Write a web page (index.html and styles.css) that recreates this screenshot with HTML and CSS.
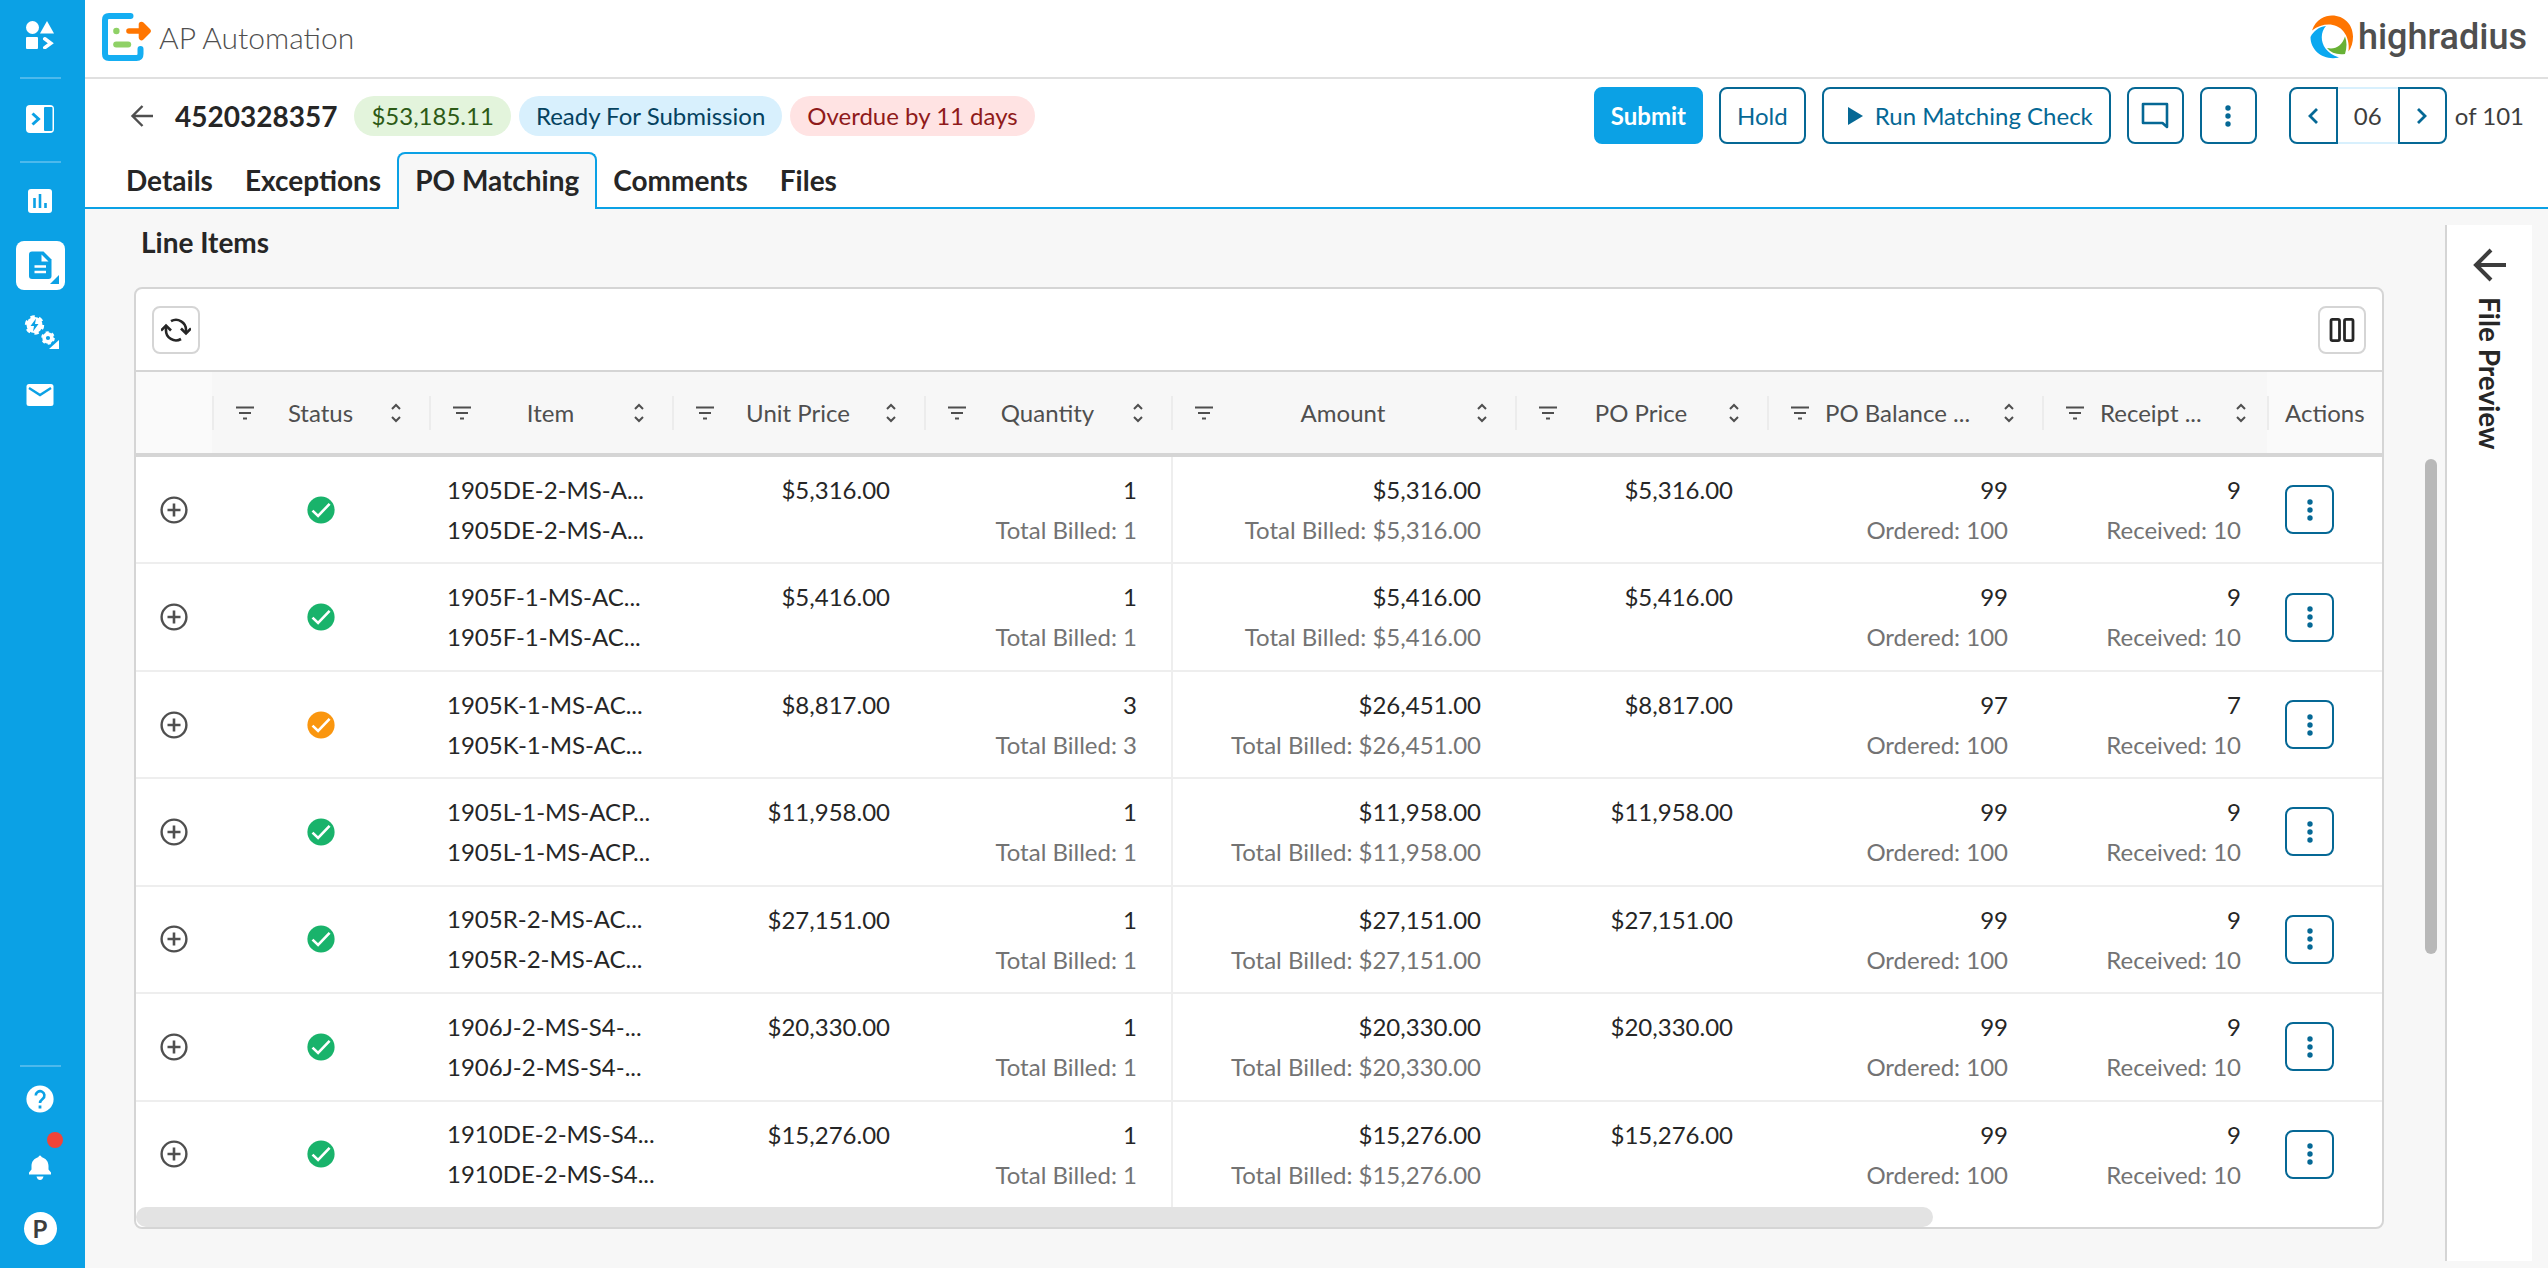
FILE: index.html
```html
<!DOCTYPE html>
<html lang="en">
<head>
    <meta charset="UTF-8">
    <meta name="viewport" content="width=device-width, initial-scale=1.0">
    <title>AP Automation</title>
    <link rel="stylesheet" href="styles.css">
</head>
<body>
    <!-- shared icons -->
    <svg class="sprite" aria-hidden="true">
        <symbol id="plus" viewBox="0 0 28 28"><circle cx="14" cy="14" r="12.4" fill="none" stroke="#4f4f4f" stroke-width="2.4"/><path d="M14 7.5v13M7.5 14h13" stroke="#4f4f4f" stroke-width="2.6"/></symbol>
        <symbol id="check" viewBox="0 0 28 28"><circle cx="14" cy="14" r="13.6" fill="currentColor"/><path d="M5.5 14.6l5.6 5.4L22.6 7.8" fill="none" stroke="#fff" stroke-width="2.6"/></symbol>
        <symbol id="dots" viewBox="0 0 24 24"><circle cx="12" cy="4" r="2.7" fill="currentColor"/><circle cx="12" cy="12" r="2.7" fill="currentColor"/><circle cx="12" cy="20" r="2.7" fill="currentColor"/></symbol>
        <symbol id="filter" viewBox="0 0 18 14"><path d="M0 1.5h18M3 7h12M7 12.5h4" stroke="#4f4f4f" stroke-width="2"/></symbol>
        <symbol id="sort" viewBox="0 0 10 20"><path d="M1 6l4-4 4 4M1 14l4 4 4-4" fill="none" stroke="#4f4f4f" stroke-width="2"/></symbol>
    </svg>

    <div class="app">
        <aside class="sidebar">
            <a class="side-link" href="#" aria-label="Apps">
                <svg width="28" height="28" viewBox="0 0 28 28" fill="#fff"><circle cx="6.5" cy="6.5" r="6.5"/><path d="M21 0l7 12.5H14z"/><rect y="16" width="12" height="12" rx="1"/><path d="M18.8 17.8l6 4.4-6 4.400" fill="none" stroke="#fff" stroke-width="3.6" stroke-linecap="round"/></svg>
            </a>
            <hr class="side-line">
            <a class="side-link" href="#" aria-label="Expand menu">
                <svg width="28" height="28" viewBox="0 0 28 28"><rect width="28" height="28" rx="4" fill="#fff"/><rect x="18" y="2" width="8.5" height="24" rx="1" fill="#0ba1e5"/><path d="M6.500 8.5l6 5.5-6 5.5" fill="none" stroke="#0ba1e5" stroke-width="3"/></svg>
            </a>
            <hr class="side-line">
            <a class="side-link" href="#" aria-label="Dashboard">
                <svg width="24" height="24" viewBox="0 0 24 24"><rect width="24" height="24" rx="3" fill="#fff"/><path d="M6.5 9v10M12 5v14M17.5 14v5" stroke="#0ba1e5" stroke-width="2.6"/></svg>
            </a>
            <a class="side-link active" href="#" aria-label="Invoices">
                <svg width="49" height="49" viewBox="0 0 49 49"><path d="M16 10.5h11.5l8 8V35q0 3-3 3H16q-3 0-3-3V13.5q0-3 3-3z" fill="#0ba1e5"/><path d="M25.5 13.5v7h7z" fill="#fff"/><path d="M18.5 25.5h11.5M18.5 31h11.5" stroke="#fff" stroke-width="2.4"/><path d="M43 34v9h-9z" fill="#0ba1e5"/></svg>
            </a>
            <a class="side-link gears" href="#" aria-label="Settings">
                <svg width="36" height="36" viewBox="0 0 36 36"><circle cx="10.5" cy="11" r="8" fill="#fff"/><circle cx="10.5" cy="11" r="8.2" fill="none" stroke="#fff" stroke-width="3" stroke-dasharray="4.3 4.29"/><path d="M12 4.5L6.5 12h3.500L9 17.5l5.500-7.500H11z" fill="#0ba1e5"/><circle cx="24" cy="24" r="3.9" fill="none" stroke="#fff" stroke-width="3.6"/><circle cx="24" cy="24" r="5.8" fill="none" stroke="#fff" stroke-width="2" stroke-dasharray="3.04 3.03"/><path d="M35 26v9h-10z" fill="#fff"/></svg>
            </a>
            <a class="side-link" href="#" aria-label="Mail">
                <svg width="28" height="22" viewBox="0 0 28 22"><rect x="0.5" width="27" height="22" rx="2.5" fill="#fff"/><path d="M3 4l11 7 11-7" fill="none" stroke="#0ba1e5" stroke-width="2.4"/></svg>
            </a>
            <div class="side-bottom">
                <hr class="side-line">
                <a class="side-link" href="#" aria-label="Help">
                    <svg width="28" height="28" viewBox="0 0 28 28"><circle cx="14" cy="14" r="13.6" fill="#fff"/><path d="M9.8 10.5a4.3 4.3 0 1 1 7 3.3c-1.7 1.4-2.8 2-2.8 4.2" fill="none" stroke="#0ba1e5" stroke-width="2.6"/><rect x="12.6" y="20.5" width="2.8" height="3" fill="#0ba1e5"/></svg>
                </a>
                <a class="side-link bell" href="#" aria-label="Notifications">
                    <svg width="22" height="25" viewBox="0 0 22 25" fill="#fff"><path d="M9.500 2a1.500 1.500 0 0 1 3 0c4.500 1.500 7 4.500 7 9v3.500l2.500 3v2H0v-2l2.500-3V11c0-4.500 2.500-7.500 7-9z"/><path d="M7.500 21.5h7q-1 3.500-3.500 3.500t-3.500-3.500z"/></svg>
                    <span class="badge"></span>
                </a>
                <button class="avatar" type="button">P</button>
            </div>
        </aside>

        <div class="main">
            <header class="topbar">
                <div class="brand">
                    <svg width="49" height="48" viewBox="0 0 49 48" fill="none"><path d="M28.5 3H7q-4 0-4 4v34q0 4 4 4h27.5q4 0 4-4v-5" stroke="#15aef2" stroke-width="6" stroke-linecap="round"/><path d="M14.2 31.5h12" stroke="#8fd166" stroke-width="6" stroke-linecap="round"/><circle cx="14.4" cy="18" r="3.2" fill="#8fd166"/><path d="M27 18h14M39.5 11.5l6.500 6.500-6.500 6.500z" stroke="#ff7500" stroke-width="5.6" stroke-linecap="round" stroke-linejoin="round" fill="#ff7500"/></svg>
                    <span class="brand-name">AP Automation</span>
                </div>
                <div class="company">
                    <svg width="44" height="44" viewBox="0 0 44 44"><path d="M2 15.5C6 4 15 .5 22 .5c12 0 21 9 21 21 0 6-1.5 11-4.5 15 1-8-1-15-5-20C26 7.5 13 7.5 2 15.5z" fill="#ff7500"/><path d="M16 11C9 18 9 36 29 42.5 14 46 .5 36 .5 22c3-6 8-10 15.500-11z" fill="#0ba8f0"/><path d="M35 21.500c2 5 2 11 0 17.500-8 1-14-1-18-6 8 2 15-2 18-11.500z" fill="#68b135"/></svg>
                    <span class="company-name">highradius</span>
                </div>
            </header>

            <section class="invoice-bar">
                <a class="back" href="#" aria-label="Back">
                    <svg width="24" height="24" viewBox="0 0 24 24" fill="none" stroke="#4f4f4f" stroke-width="2.4"><path d="M23 12H3M12.500 2l-10 10 10 10"/></svg>
                </a>
                <h1 class="invoice-no">4520328357</h1>
                <span class="pill green">$53,185.11</span>
                <span class="pill blue">Ready For Submission</span>
                <span class="pill red">Overdue by 11 days</span>
                <div class="actions">
                    <button class="btn primary" type="button">Submit</button>
                    <button class="btn" type="button">Hold</button>
                    <button class="btn run" type="button"><svg width="15" height="18" viewBox="0 0 15 18"><path d="M0 0l15 9-15 9z" fill="#056895"/></svg>Run Matching Check</button>
                    <button class="btn square" type="button" aria-label="Comment"><svg width="28" height="28" viewBox="0 0 28 28" fill="none" stroke="#056895" stroke-width="2.6"><path d="M2 2h24v23l-4.500-4H2z" stroke-linejoin="round"/></svg></button>
                    <button class="btn square" type="button" aria-label="More"><svg width="24" height="24"><use href="#dots"/></svg></button>
                    <div class="pager">
                        <button class="btn prev" type="button" aria-label="Previous"><svg width="10" height="16" viewBox="0 0 10 16" fill="none" stroke="#056895" stroke-width="2.8"><path d="M9 1L2 8l7 7"/></svg></button>
                        <input class="page-input" type="text" value="06" aria-label="Page">
                        <button class="btn next" type="button" aria-label="Next"><svg width="10" height="16" viewBox="0 0 10 16" fill="none" stroke="#056895" stroke-width="2.8"><path d="M1 1l7 7-7 7"/></svg></button>
                        <span class="page-total">of 101</span>
                    </div>
                </div>
            </section>

            <nav class="tabs">
                <a class="tab" href="#">Details</a>
                <a class="tab" href="#">Exceptions</a>
                <a class="tab active" href="#">PO Matching</a>
                <a class="tab" href="#">Comments</a>
                <a class="tab" href="#">Files</a>
            </nav>

            <div class="content">
                <section class="line-items">
                    <h2 class="title">Line Items</h2>
                    <div class="card">
                        <div class="toolbar">
                            <button class="tool" type="button" aria-label="Refresh"><svg width="30" height="24" viewBox="0 0 30 24" fill="none" stroke="#262626" stroke-width="2.6"><path d="M10 3.200a10 10 0 0 1 15 9v2M20 21a10 10 0 0 1-15-9v-3"/><path d="M20 10.500l5 5 5-5M0 12.500l5-5 5 5"/></svg></button>
                            <button class="tool" type="button" aria-label="Columns"><svg width="26" height="24" viewBox="0 0 26 24" fill="none" stroke="#262626" stroke-width="2.8"><rect x="2" y="1.400" width="8.500" height="21.200" rx="1.500"/><rect x="15.500" y="1.400" width="8.500" height="21.200" rx="1.500"/></svg></button>
                        </div>
                        <div class="table-wrap">
                            <table class="items">
                                <colgroup>
                                    <col class="c-expand"><col class="c-status"><col class="c-item"><col class="c-price"><col class="c-qty"><col><col class="c-price"><col class="c-balance"><col class="c-receipt"><col class="c-actions">
                                </colgroup>
                                <thead>
                                    <tr>
                                        <th class="fixed"></th>
                                        <th><div class="head"><svg width="18" height="14"><use href="#filter"/></svg><span>Status</span><svg width="10" height="20"><use href="#sort"/></svg></div></th>
                                        <th><div class="head"><svg width="18" height="14"><use href="#filter"/></svg><span>Item</span><svg width="10" height="20"><use href="#sort"/></svg></div></th>
                                        <th><div class="head"><svg width="18" height="14"><use href="#filter"/></svg><span>Unit Price</span><svg width="10" height="20"><use href="#sort"/></svg></div></th>
                                        <th><div class="head"><svg width="18" height="14"><use href="#filter"/></svg><span>Quantity</span><svg width="10" height="20"><use href="#sort"/></svg></div></th>
                                        <th><div class="head"><svg width="18" height="14"><use href="#filter"/></svg><span>Amount</span><svg width="10" height="20"><use href="#sort"/></svg></div></th>
                                        <th><div class="head"><svg width="18" height="14"><use href="#filter"/></svg><span>PO Price</span><svg width="10" height="20"><use href="#sort"/></svg></div></th>
                                        <th><div class="head long"><svg width="18" height="14"><use href="#filter"/></svg><span>PO Balance ...</span><svg width="10" height="20"><use href="#sort"/></svg></div></th>
                                        <th><div class="head long receipt"><svg width="18" height="14"><use href="#filter"/></svg><span>Receipt ...</span><svg width="10" height="20"><use href="#sort"/></svg></div></th>
                                        <th class="fixed"><div class="head last">Actions</div></th>
                                    </tr>
                                </thead>
                                <tbody>
                                    <tr>
                                        <td class="expand"><button class="icon-btn" type="button" aria-label="Expand"><svg width="28" height="28"><use href="#plus"/></svg></button></td>
                                        <td class="status ok"><svg width="28" height="28"><use href="#check"/></svg></td>
                                        <td class="item"><p>1905DE-2-MS-A...</p><p>1905DE-2-MS-A...</p></td>
                                        <td class="num"><p>$5,316.00</p></td>
                                        <td class="num"><p>1</p><p class="sub">Total Billed: 1</p></td>
                                        <td class="num amount"><p>$5,316.00</p><p class="sub">Total Billed: $5,316.00</p></td>
                                        <td class="num"><p>$5,316.00</p></td>
                                        <td class="num"><p>99</p><p class="sub">Ordered: 100</p></td>
                                        <td class="num receipt"><p>9</p><p class="sub">Received: 10</p></td>
                                        <td class="row-actions"><button class="more" type="button" aria-label="Row actions"><svg width="24" height="24"><use href="#dots"/></svg></button></td>
                                    </tr>
                                    <tr>
                                        <td class="expand"><button class="icon-btn" type="button" aria-label="Expand"><svg width="28" height="28"><use href="#plus"/></svg></button></td>
                                        <td class="status ok"><svg width="28" height="28"><use href="#check"/></svg></td>
                                        <td class="item"><p>1905F-1-MS-AC...</p><p>1905F-1-MS-AC...</p></td>
                                        <td class="num"><p>$5,416.00</p></td>
                                        <td class="num"><p>1</p><p class="sub">Total Billed: 1</p></td>
                                        <td class="num amount"><p>$5,416.00</p><p class="sub">Total Billed: $5,416.00</p></td>
                                        <td class="num"><p>$5,416.00</p></td>
                                        <td class="num"><p>99</p><p class="sub">Ordered: 100</p></td>
                                        <td class="num receipt"><p>9</p><p class="sub">Received: 10</p></td>
                                        <td class="row-actions"><button class="more" type="button" aria-label="Row actions"><svg width="24" height="24"><use href="#dots"/></svg></button></td>
                                    </tr>
                                    <tr>
                                        <td class="expand"><button class="icon-btn" type="button" aria-label="Expand"><svg width="28" height="28"><use href="#plus"/></svg></button></td>
                                        <td class="status warn"><svg width="28" height="28"><use href="#check"/></svg></td>
                                        <td class="item"><p>1905K-1-MS-AC...</p><p>1905K-1-MS-AC...</p></td>
                                        <td class="num"><p>$8,817.00</p></td>
                                        <td class="num"><p>3</p><p class="sub">Total Billed: 3</p></td>
                                        <td class="num amount"><p>$26,451.00</p><p class="sub">Total Billed: $26,451.00</p></td>
                                        <td class="num"><p>$8,817.00</p></td>
                                        <td class="num"><p>97</p><p class="sub">Ordered: 100</p></td>
                                        <td class="num receipt"><p>7</p><p class="sub">Received: 10</p></td>
                                        <td class="row-actions"><button class="more" type="button" aria-label="Row actions"><svg width="24" height="24"><use href="#dots"/></svg></button></td>
                                    </tr>
                                    <tr>
                                        <td class="expand"><button class="icon-btn" type="button" aria-label="Expand"><svg width="28" height="28"><use href="#plus"/></svg></button></td>
                                        <td class="status ok"><svg width="28" height="28"><use href="#check"/></svg></td>
                                        <td class="item"><p>1905L-1-MS-ACP...</p><p>1905L-1-MS-ACP...</p></td>
                                        <td class="num"><p>$11,958.00</p></td>
                                        <td class="num"><p>1</p><p class="sub">Total Billed: 1</p></td>
                                        <td class="num amount"><p>$11,958.00</p><p class="sub">Total Billed: $11,958.00</p></td>
                                        <td class="num"><p>$11,958.00</p></td>
                                        <td class="num"><p>99</p><p class="sub">Ordered: 100</p></td>
                                        <td class="num receipt"><p>9</p><p class="sub">Received: 10</p></td>
                                        <td class="row-actions"><button class="more" type="button" aria-label="Row actions"><svg width="24" height="24"><use href="#dots"/></svg></button></td>
                                    </tr>
                                    <tr>
                                        <td class="expand"><button class="icon-btn" type="button" aria-label="Expand"><svg width="28" height="28"><use href="#plus"/></svg></button></td>
                                        <td class="status ok"><svg width="28" height="28"><use href="#check"/></svg></td>
                                        <td class="item"><p>1905R-2-MS-AC...</p><p>1905R-2-MS-AC...</p></td>
                                        <td class="num"><p>$27,151.00</p></td>
                                        <td class="num"><p>1</p><p class="sub">Total Billed: 1</p></td>
                                        <td class="num amount"><p>$27,151.00</p><p class="sub">Total Billed: $27,151.00</p></td>
                                        <td class="num"><p>$27,151.00</p></td>
                                        <td class="num"><p>99</p><p class="sub">Ordered: 100</p></td>
                                        <td class="num receipt"><p>9</p><p class="sub">Received: 10</p></td>
                                        <td class="row-actions"><button class="more" type="button" aria-label="Row actions"><svg width="24" height="24"><use href="#dots"/></svg></button></td>
                                    </tr>
                                    <tr>
                                        <td class="expand"><button class="icon-btn" type="button" aria-label="Expand"><svg width="28" height="28"><use href="#plus"/></svg></button></td>
                                        <td class="status ok"><svg width="28" height="28"><use href="#check"/></svg></td>
                                        <td class="item"><p>1906J-2-MS-S4-...</p><p>1906J-2-MS-S4-...</p></td>
                                        <td class="num"><p>$20,330.00</p></td>
                                        <td class="num"><p>1</p><p class="sub">Total Billed: 1</p></td>
                                        <td class="num amount"><p>$20,330.00</p><p class="sub">Total Billed: $20,330.00</p></td>
                                        <td class="num"><p>$20,330.00</p></td>
                                        <td class="num"><p>99</p><p class="sub">Ordered: 100</p></td>
                                        <td class="num receipt"><p>9</p><p class="sub">Received: 10</p></td>
                                        <td class="row-actions"><button class="more" type="button" aria-label="Row actions"><svg width="24" height="24"><use href="#dots"/></svg></button></td>
                                    </tr>
                                    <tr>
                                        <td class="expand"><button class="icon-btn" type="button" aria-label="Expand"><svg width="28" height="28"><use href="#plus"/></svg></button></td>
                                        <td class="status ok"><svg width="28" height="28"><use href="#check"/></svg></td>
                                        <td class="item"><p>1910DE-2-MS-S4...</p><p>1910DE-2-MS-S4...</p></td>
                                        <td class="num"><p>$15,276.00</p></td>
                                        <td class="num"><p>1</p><p class="sub">Total Billed: 1</p></td>
                                        <td class="num amount"><p>$15,276.00</p><p class="sub">Total Billed: $15,276.00</p></td>
                                        <td class="num"><p>$15,276.00</p></td>
                                        <td class="num"><p>99</p><p class="sub">Ordered: 100</p></td>
                                        <td class="num receipt"><p>9</p><p class="sub">Received: 10</p></td>
                                        <td class="row-actions"><button class="more" type="button" aria-label="Row actions"><svg width="24" height="24"><use href="#dots"/></svg></button></td>
                                    </tr>
                                </tbody>
                            </table>
                        </div>
                        <div class="h-scroll"><div class="h-thumb"></div></div>
                    </div>
                </section>
                <div class="v-scroll"><div class="v-thumb"></div></div>
                <aside class="preview">
                    <button class="icon-btn" type="button" aria-label="Open file preview"><svg width="34" height="34" viewBox="0 0 34 34" fill="none" stroke="#3d3d3d" stroke-width="4"><path d="M33 17H4M18 2L3 17l15 15"/></svg></button>
                    <span class="preview-label">File Preview</span>
                </aside>
            </div>
        </div>
    </div>
</body>
</html>
```

FILE: styles.css
```css
* {
    box-sizing: border-box;
}
body {
    margin: 0;
    font-family: Lato, "Open Sans", sans-serif;
    font-size: 24px;
    line-height: 40px;
    color: #262626;
    background: #f7f7f7;
}
button, input {
    font: inherit;
    margin: 0;
    padding: 0;
}
button {
    cursor: pointer;
}
a {
    color: inherit;
    text-decoration: none;
}
svg {
    display: block;
    flex: none;
}
h1, h2, p {
    margin: 0;
}
.sprite {
    position: absolute;
    width: 0;
    height: 0;
}
.app {
    display: flex;
    height: 100vh;
}

/* sidebar */
.sidebar {
    flex: none;
    width: 85px;
    padding: 21px 5px 0 0;
    background: #0ba1e5;
    display: flex;
    flex-direction: column;
    align-items: center;
}
.side-link {
    display: flex;
    justify-content: center;
    margin-bottom: 28px;
}
.side-line {
    width: 41px;
    height: 2px;
    margin: 0 0 26px;
    border: 0;
    background: #4db9ec;
}
.side-link.active {
    background: #fff;
    border-radius: 8px;
    margin-bottom: 24px;
}
.side-link.gears {
    margin: 0 0 34px 4px;
}
.side-bottom {
    margin-top: auto;
    display: flex;
    flex-direction: column;
    align-items: center;
}
.side-bottom .side-line {
    margin: 0 0 18px;
}
.side-bottom .side-link {
    margin-bottom: 42px;
}
.side-bottom .bell {
    position: relative;
    margin-bottom: 32px;
}
.badge {
    position: absolute;
    top: -23px;
    right: -12px;
    width: 16px;
    height: 16px;
    border-radius: 50%;
    background: #f04438;
}
.avatar {
    width: 33px;
    height: 33px;
    margin-bottom: 23px;
    border: 0;
    border-radius: 50%;
    background: #fff;
    color: #3d3d3d;
    font-weight: 700;
    line-height: 33px;
}

/* top bar */
.main {
    flex: 1;
    min-width: 0;
    display: flex;
    flex-direction: column;
}
.topbar {
    flex: none;
    height: 79px;
    padding: 0 21px 4px 17px;
    border-bottom: 2px solid #e0e0e0;
    background: #fff;
    display: flex;
    align-items: center;
    justify-content: space-between;
}
.brand, .company {
    display: flex;
    align-items: center;
}
.brand {
    gap: 8px;
}
.brand-name {
    font-size: 30px;
    font-weight: 300;
    color: #4f4f4f;
}
.company {
    gap: 4px;
}
.company-name {
    font-family: Roboto, "Open Sans", sans-serif;
    font-size: 36px;
    font-weight: 500;
    color: #4f4f4f;
}

.invoice-bar {
    flex: none;
    padding: 8px 24px 8px 45px;
    background: #fff;
    display: flex;
    align-items: center;
}
.invoice-no {
    margin: 0 17px 0 21px;
    font-size: 28px;
    font-weight: 700;
}
.pill {
    margin-right: 8px;
    padding: 0 17px;
    border-radius: 20px;
}
.pill.green {
    background: #e3f4dc;
    color: #2c5a15;
}
.pill.blue {
    background: #d8f0fd;
    color: #05425f;
}
.pill.red {
    background: #ffe3e3;
    color: #8f1a1a;
}
.actions {
    margin-left: auto;
    display: flex;
    align-items: center;
    gap: 16px;
}
.btn {
    height: 57px;
    padding: 0 16px;
    border: 2px solid #056895;
    border-radius: 8px;
    background: #fff;
    color: #056895;
    display: flex;
    align-items: center;
    justify-content: center;
}
.btn.primary {
    padding: 0 15px;
    border-color: #0ba1e5;
    background: #0ba1e5;
    color: #fff;
    font-weight: 700;
}
.btn.run {
    padding: 0 16px 0 24px;
    gap: 12px;
}
.btn.square {
    width: 57px;
    padding: 0;
}
.pager {
    margin-left: 16px;
    display: flex;
    align-items: center;
}
.btn.prev, .btn.next {
    width: 49px;
    padding: 0;
}
.btn.prev {
    border-radius: 8px 0 0 8px;
}
.btn.next {
    border-radius: 0 8px 8px 0;
}
.page-input {
    width: 60px;
    height: 57px;
    border: solid #d8f0fd;
    border-width: 2px 0;
    border-radius: 0;
    background: #fff;
    color: #3d3d3d;
    text-align: center;
}
.page-total {
    margin-left: 8px;
    color: #3d3d3d;
}

.tabs {
    flex: none;
    padding-left: 25px;
    border-bottom: 2px solid #0ba1e5;
    background: #fff;
    display: flex;
}
.tab {
    height: 55px;
    padding: 2px 16px 0;
    font-size: 28px;
    font-weight: 700;
    line-height: 52px;
}
.tab.active {
    height: 57px;
    margin-bottom: -2px;
    padding-top: 0;
    border: 2px solid #0ba1e5;
    border-bottom: 0;
    border-radius: 8px 8px 0 0;
    background: #f7f7f7;
}

/* content */
.content {
    flex: 1;
    min-height: 0;
    padding-left: 49px;
    display: flex;
}
.line-items {
    flex: 1;
    min-width: 0;
    padding-bottom: 39px;
    display: flex;
    flex-direction: column;
}
.title {
    padding: 13px 0 25px 7px;
    font-size: 28px;
    font-weight: 700;
}
.card {
    flex: 1;
    min-height: 0;
    border: 2px solid #d5d5d5;
    border-radius: 8px;
    background: #fff;
    overflow: hidden;
    display: flex;
    flex-direction: column;
}
.toolbar {
    flex: none;
    height: 83px;
    padding: 0 16px;
    border-bottom: 2px solid #d5d5d5;
    display: flex;
    align-items: center;
    justify-content: space-between;
}
.tool {
    width: 48px;
    height: 48px;
    border: 2px solid #d5d5d5;
    border-radius: 8px;
    background: #fff;
    display: flex;
    align-items: center;
    justify-content: center;
}
.table-wrap {
    flex: 1;
    min-height: 0;
    margin-bottom: -2px;
}
.items {
    width: 100%;
    height: 100%;
    table-layout: fixed;
    border-collapse: separate;
    border-spacing: 0;
}
.c-expand { width: 76px; }
.c-status { width: 217px; }
.c-item { width: 243px; }
.c-price { width: 252px; }
.c-qty { width: 247px; }
.c-balance { width: 275px; }
.c-receipt { width: 225px; }
.c-actions { width: 115px; }
.items th {
    height: 85px;
    padding: 0;
    border-bottom: 4px solid #d5d5d5;
    background: #f7f7f7;
    color: #4f4f4f;
    font-weight: 400;
}
.items th.fixed {
    background: #fafafa;
}
.head {
    height: 34px;
    padding: 0 28px 0 22px;
    border-left: 2px solid #ececec;
    display: flex;
    align-items: center;
}
.head span {
    flex: 1;
    padding: 0 20px 0 16px;
    white-space: nowrap;
}
.head.long span {
    padding-right: 0;
    text-align: left;
}
.head.receipt {
    padding-right: 21px;
}
.head.last {
    padding: 0 0 0 16px;
}
.items td {
    padding: 0;
    border-bottom: 2px solid #eee;
    vertical-align: middle;
}
.items tr:last-child td {
    border-bottom-color: #fff;
}
.items td.item {
    padding-left: 18px;
}
.items td.num {
    padding-right: 34px;
    text-align: right;
    vertical-align: top;
    padding-top: 13px;
}
.items td.amount {
    border-left: 2px solid #eee;
}
.items td.receipt {
    padding-right: 26px;
}
.sub {
    color: #737373;
}
.expand svg, .status svg {
    margin: 0 auto;
}
.status.ok {
    color: #19b36b;
}
.status.warn {
    color: #fa960f;
}
.icon-btn {
    display: block;
    margin: 0 auto;
    border: 0;
    background: none;
}
.row-actions .more {
    width: 49px;
    height: 49px;
    margin-left: 18px;
    border: 2px solid #056895;
    border-radius: 8px;
    background: #fff;
    color: #056895;
    display: flex;
    align-items: center;
    justify-content: center;
}
.h-scroll {
    flex: none;
    height: 20px;
    position: relative;
}
.h-thumb {
    width: 80%;
    height: 20px;
    border-radius: 10px;
    background: #e3e3e3;
}
.v-scroll {
    flex: none;
    width: 61px;
    padding: 250px 8px 0 41px;
}
.v-thumb {
    height: 495px;
    border-radius: 6px;
    background: #b8b8b8;
}
.preview {
    flex: none;
    width: 87px;
    margin: 16px 16px 7px 0;
    padding-top: 23px;
    border-left: 2px solid #d5d5d5;
    background: #fff;
    display: flex;
    flex-direction: column;
    align-items: center;
    gap: 15px;
}
.preview .icon-btn {
    flex: none;
}
.preview-label {
    writing-mode: vertical-rl;
    font-size: 28px;
    font-weight: 700;
}
```
